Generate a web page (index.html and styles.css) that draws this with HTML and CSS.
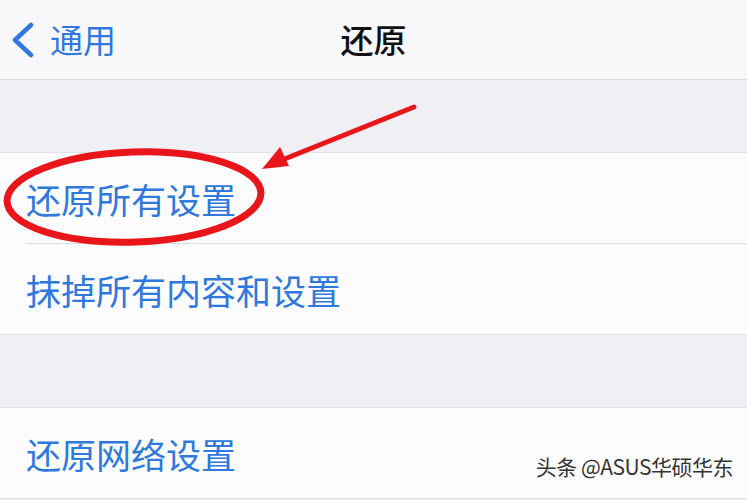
FILE: index.html
```html
<!DOCTYPE html>
<html lang="zh-CN">
<head>
  <meta charset="UTF-8" />
  <meta name="viewport" content="width=device-width, initial-scale=1.0" />
  <title>还原</title>
  <link rel="stylesheet" href="styles.css">
</head>
<body>
  <div class="screen">
    <div class="navbar">
      <div class="back">
        <svg class="chevron" width="26" height="36" viewBox="0 0 26 36">
          <path d="M21 3 L5 18 L21 33" fill="none" stroke="#2f78dc" stroke-width="4.5" stroke-linecap="round" stroke-linejoin="round"/>
        </svg>
        <span>通用</span>
      </div>
      <div class="title">还原</div>
    </div>

    <div class="gap"></div>

    <div class="group">
      <div class="row">还原所有设置</div>
      <div class="row">抹掉所有内容和设置</div>
    </div>

    <div class="gap"></div>

    <div class="group">
      <div class="row">还原网络设置</div>
    </div>

    <!-- Annotation: circle + arrow -->
    <svg class="markup" width="747" height="500" viewBox="0 0 747 500">
      <ellipse cx="134" cy="197" rx="127" ry="45" fill="none" stroke="#e8161b" stroke-width="7" transform="rotate(-2 134 197)"/>
      <line x1="414" y1="107" x2="282" y2="160" stroke="#e8161b" stroke-width="5" stroke-linecap="round"/>
      <polygon points="262,169 280,147 289,166" fill="#e8161b"/>
    </svg>

    <div class="watermark">头条 @ASUS华硕华东</div>
  </div>
</body>
</html>
```

FILE: styles.css
```css
body {
  margin: 0;
  background: #efeff4;
  font-family: "Noto Sans CJK SC", "Noto Sans", sans-serif;
}

.screen {
  position: relative;
  width: 747px;
  height: 500px;
  overflow: hidden;
  background: #efeff4;
}

.navbar {
  position: relative;
  height: 80px;
  background: #f8f8fa;
  border-bottom: 1px solid #dadade;
  box-sizing: border-box;
  display: flex;
  align-items: center;
}

.back {
  display: flex;
  align-items: center;
  gap: 14px;
  padding-left: 10px;
  color: #2f78dc;
  font-size: 33px;
  line-height: 1;
}

.title {
  position: absolute;
  left: 0;
  right: 0;
  text-align: center;
  font-size: 33px;
  font-weight: 500;
  color: #111;
  line-height: 1;
  pointer-events: none;
}

.gap {
  height: 72px;
}

.group {
  background: #fcfcfe;
  border-top: 1px solid #e2e2e6;
  border-bottom: 1px solid #e2e2e6;
}

.row {
  height: 90px;
  display: flex;
  align-items: center;
  margin-left: 26px;
  font-size: 35px;
  color: #2f78dc;
  line-height: 1;
}

.row + .row {
  border-top: 1px solid #dcdce0;
}

.markup {
  position: absolute;
  left: 0;
  top: 0;
}

.watermark {
  position: absolute;
  right: 14px;
  bottom: 19px;
  font-size: 21px;
  color: #333;
  text-shadow: 0 0 2px #fff, 1px 1px 0 #fff;
  letter-spacing: -0.5px;
}
```
